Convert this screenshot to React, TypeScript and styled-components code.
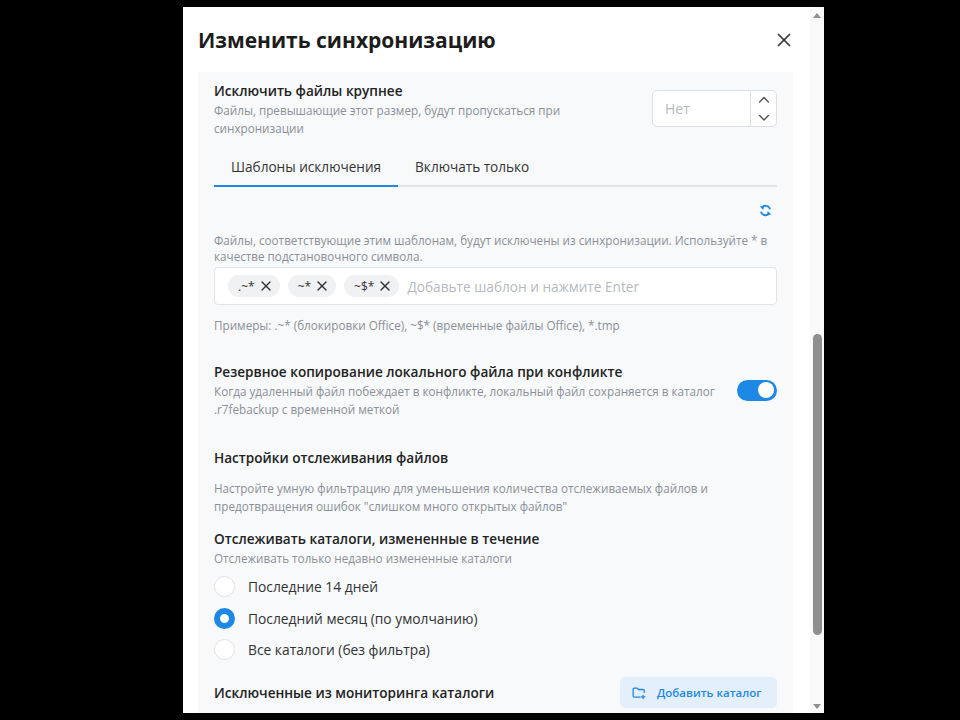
import React from 'react'
import styled, { createGlobalStyle } from 'styled-components'
import { X, ChevronUp, ChevronDown } from 'lucide-react'

const GlobalStyle = createGlobalStyle`
  html, body {
    margin: 0;
    padding: 0;
    background: #000;
    font-family: 'Open Sans', 'Noto Sans', sans-serif;
  }
`

const Screen = styled.div`
  width: 960px;
  height: 720px;
  background: #000;
  display: flex;
  justify-content: center;
  padding: 7px 136px 7px 183px;
  box-sizing: border-box;
`

const Dialog = styled.div`
  width: 641px;
  height: 706px;
  background: #fff;
  display: flex;
  overflow: hidden;
`

const Main = styled.div`
  flex: 1;
  min-width: 0;
  display: flex;
  flex-direction: column;
`

const Header = styled.div`
  height: 65px;
  flex: none;
  padding: 0 15px 0 15px;
  display: flex;
  align-items: center;
  justify-content: space-between;
  box-sizing: border-box;
`

const Title = styled.h2`
  margin: 0;
  font-size: 21px;
  font-weight: 700;
  color: #1c1c1c;
`

const CloseButton = styled.div`
  display: flex;
  color: #333;
`

const Panel = styled.div`
  flex: 1;
  margin: 0 17px 0 15px;
  background: #f7f9fb;
  padding: 9px 16px 0;
  overflow: hidden;
`

const Row = styled.div`
  display: flex;
  justify-content: space-between;
`

const RowText = styled.div`
  width: ${p => p.$w || 400}px;
`

const Label = styled.div`
  font-size: 13.6px;
  line-height: 20px;
  font-weight: 600;
  color: #222;
`

const Hint = styled.div`
  font-size: 11.7px;
  line-height: 18px;
  color: #8b9096;
`

const SizeInput = styled.div`
  width: 125px;
  height: 37px;
  margin-top: 9px;
  background: #fff;
  border: 1px solid #dcdfe3;
  border-radius: 5px;
  display: flex;
  box-sizing: border-box;
`

const SizeValue = styled.div`
  flex: 1;
  padding-left: 12px;
  font-size: 14px;
  line-height: 35px;
  color: #b5b9be;
`

const Stepper = styled.div`
  width: 25px;
  border-left: 1px solid #dcdfe3;
  display: flex;
  flex-direction: column;
  align-items: center;
  justify-content: center;
  color: #555;
`

const Tabs = styled.div`
  display: flex;
  height: 40px;
  margin-top: 10px;
  border-bottom: 2px solid #e3e5e8;
  box-sizing: border-box;
`

const Tab = styled.div`
  padding: 0 17px;
  font-size: 13.6px;
  line-height: 40px;
  height: 40px;
  box-sizing: border-box;
  color: #333;
  border-bottom: 2px solid ${p => (p.$active ? '#1e88e5' : 'transparent')};
`

const RefreshRow = styled.div`
  display: flex;
  justify-content: flex-end;
  padding: 17px 5px 0 0;
  color: #1e88e5;
  height: 45px;
  box-sizing: border-box;
`

const PatternHint = styled(Hint)`
  line-height: 16px;
`

const TagInput = styled.div`
  height: 38px;
  margin-top: 3px;
  background: #fff;
  border: 1px solid #e2e4e8;
  border-radius: 4px;
  display: flex;
  align-items: center;
  padding-left: 13px;
  gap: 8px;
  box-sizing: border-box;
`

const Tag = styled.div`
  height: 22px;
  padding: 0 6px 0 10px;
  border-radius: 11px;
  background: #f0f1f3;
  display: flex;
  align-items: center;
  gap: 3px;
  font-size: 12px;
  color: #333;
`

const Placeholder = styled.div`
  font-size: 13.65px;
  color: #b5b9be;
`

const Examples = styled(Hint)`
  margin-top: 11px;
`

const BackupRow = styled(Row)`
  margin-top: 28px;
  align-items: center;
`

const Toggle = styled.div`
  width: 40px;
  height: 21px;
  border-radius: 11px;
  background: #1e88e5;
  display: flex;
  justify-content: flex-end;
  align-items: center;
  padding-right: 3px;
  box-sizing: border-box;
`

const Knob = styled.div`
  width: 16px;
  height: 16px;
  border-radius: 50%;
  background: #fff;
`

const SectionTitle = styled(Label)`
  margin-top: 30px;
`

const SectionHint = styled(Hint)`
  margin-top: 11px;
`

const Watch = styled.div`
  margin-top: 14px;
`

const RadioGroup = styled.div`
  margin-top: 9px;
  display: flex;
  flex-direction: column;
  gap: 10.5px;
`

const RadioRow = styled.div`
  display: flex;
  align-items: center;
  gap: 13px;
  height: 21px;
  font-size: 13.8px;
  color: #333;
`

const RadioDot = styled.div`
  width: 21px;
  height: 21px;
  border-radius: 50%;
  box-sizing: border-box;
  background: #fff;
  border: ${p => (p.$on ? '6px solid #1e88e5' : '1px solid #e0e2e5')};
`

const BottomRow = styled(Row)`
  margin-top: 17px;
  align-items: center;
`

const AddButton = styled.div`
  width: 157px;
  height: 31px;
  padding-left: 12px;
  box-sizing: border-box;
  border-radius: 5px;
  background: #e3f0fb;
  color: #1e88e5;
  display: flex;
  align-items: center;
  gap: 11px;
  font-size: 11.5px;
  font-weight: 600;
`

const Scrollbar = styled.div`
  width: 14px;
  flex: none;
  background: #f8f9fa;
  display: flex;
  flex-direction: column;
  align-items: center;
  justify-content: space-between;
  padding: 6px 0 4px;
  box-sizing: border-box;
`

const Arrow = styled.div`
  width: 0;
  height: 0;
  border-left: 4px solid transparent;
  border-right: 4px solid transparent;
  border-${p => (p.$up ? 'bottom' : 'top')}: 5px solid #8f8f8f;
`

const Track = styled.div`
  flex: 1;
  width: 100%;
  padding: 316px 2px 0 3px;
  box-sizing: border-box;
`

const Thumb = styled.div`
  height: 301px;
  border-radius: 5px;
  background: #8f8f8f;
`

const FolderAddIcon = () => (
  <svg width="14" height="14" viewBox="0 0 24 24" fill="none" stroke="currentColor" strokeWidth="2.2" strokeLinecap="round" strokeLinejoin="round">
    <path d="M21 11V8a2 2 0 0 0-2-2h-8L9 3.5H4a2 2 0 0 0-2 2V17a2 2 0 0 0 2 2h10" />
    <path d="M19 15.5v6M16 18.5h6" />
  </svg>
)

const SyncIcon = () => (
  <svg width="13" height="13" viewBox="0 0 24 24" fill="none" stroke="currentColor" strokeWidth="3.4" strokeLinecap="round">
    <path d="M20 8.5A9 9 0 0 0 6 5.5" />
    <path d="M4 15.5A9 9 0 0 0 18 18.5" />
    <path d="M1.5 4.5l7.5-1-1 7.5z" fill="currentColor" stroke="none" />
    <path d="M22.5 19.5l-7.5 1 1-7.5z" fill="currentColor" stroke="none" />
  </svg>
)

const tags = ['.~*', '~*', '~$*']
const radios = ['Последние 14 дней', 'Последний месяц (по умолчанию)', 'Все каталоги (без фильтра)']

export default function App() {
  return (
    <Screen>
      <GlobalStyle />
      <Dialog>
        <Main>
          <Header>
            <Title>Изменить синхронизацию</Title>
            <CloseButton>
              <X size={22} strokeWidth={1.8} />
            </CloseButton>
          </Header>
          <Panel>
            <Row>
              <RowText $w={400}>
                <Label>Исключить файлы крупнее</Label>
                <Hint>Файлы, превышающие этот размер, будут пропускаться при синхронизации</Hint>
              </RowText>
              <SizeInput>
                <SizeValue>Нет</SizeValue>
                <Stepper>
                  <ChevronUp size={18} />
                  <ChevronDown size={18} />
                </Stepper>
              </SizeInput>
            </Row>
            <Tabs>
              <Tab $active>Шаблоны исключения</Tab>
              <Tab>Включать только</Tab>
            </Tabs>
            <RefreshRow>
              <SyncIcon />
            </RefreshRow>
            <PatternHint>
              Файлы, соответствующие этим шаблонам, будут исключены из синхронизации. Используйте * в
              качестве подстановочного символа.
            </PatternHint>
            <TagInput>
              {tags.map(t => (
                <Tag key={t}>
                  {t}
                  <X size={16} strokeWidth={2} />
                </Tag>
              ))}
              <Placeholder>Добавьте шаблон и нажмите Enter</Placeholder>
            </TagInput>
            <Examples>Примеры: .~* (блокировки Office), ~$* (временные файлы Office), *.tmp</Examples>
            <BackupRow>
              <RowText $w={510}>
                <Label>Резервное копирование локального файла при конфликте</Label>
                <Hint>
                  Когда удаленный файл побеждает в конфликте, локальный файл сохраняется в каталог
                  .r7febackup с временной меткой
                </Hint>
              </RowText>
              <Toggle>
                <Knob />
              </Toggle>
            </BackupRow>
            <SectionTitle>Настройки отслеживания файлов</SectionTitle>
            <SectionHint>
              Настройте умную фильтрацию для уменьшения количества отслеживаемых файлов и
              <br />
              предотвращения ошибок "слишком много открытых файлов"
            </SectionHint>
            <Watch>
              <Label>Отслеживать каталоги, измененные в течение</Label>
              <Hint>Отслеживать только недавно измененные каталоги</Hint>
            </Watch>
            <RadioGroup>
              {radios.map((r, i) => (
                <RadioRow key={r}>
                  <RadioDot $on={i === 1} />
                  {r}
                </RadioRow>
              ))}
            </RadioGroup>
            <BottomRow>
              <Label>Исключенные из мониторинга каталоги</Label>
              <AddButton>
                <FolderAddIcon />
                Добавить каталог
              </AddButton>
            </BottomRow>
          </Panel>
        </Main>
        <Scrollbar>
          <Arrow $up />
          <Track>
            <Thumb />
          </Track>
          <Arrow />
        </Scrollbar>
      </Dialog>
    </Screen>
  )
}
